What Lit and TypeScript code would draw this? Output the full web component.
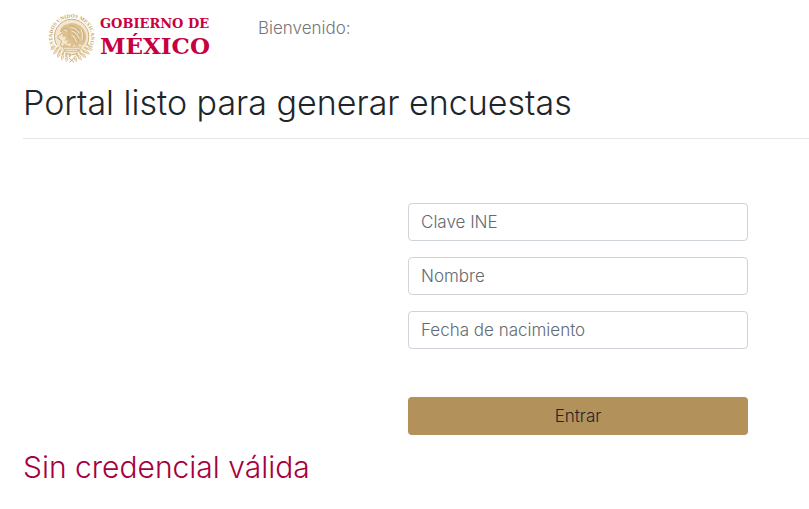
import { LitElement, html, css, svg } from "lit";
import { customElement } from "lit/decorators.js";

/* Leaves of the laurel and oak wreath, set along the lower part of the seal. */
const leafAngles = [-60, -48, -36, -24, -12, 12, 24, 36, 48, 60];

@customElement("national-seal")
export class NationalSeal extends LitElement {
  static styles = css`
    :host {
      display: block;
      width: 47px;
      height: 54px;
    }
    svg {
      display: block;
      width: 100%;
      height: 100%;
    }
    .legend {
      font: 700 16px "Liberation Serif", serif;
      fill: #c9a76d;
    }
    .pale {
      fill: #f3e7d0;
    }
    .gold {
      fill: #dcc293;
    }
    .line {
      fill: none;
      stroke: #cdae78;
      stroke-width: 3;
      stroke-linecap: round;
    }
    .light {
      fill: none;
      stroke: #fffaf0;
      stroke-width: 2;
      stroke-linecap: round;
    }
  `;

  render() {
    return html`
      <svg viewBox="24 18 141 162" aria-hidden="true">
        <defs>
          <path id="arc" d="M53 139 A58 58 0 1 1 137 139" />
        </defs>
        <circle class="pale" cx="95" cy="99" r="52" />
        <text class="legend">
          <textPath href="#arc" startOffset="50%" text-anchor="middle">ESTADOS UNIDOS MEXICANOS</textPath>
        </text>
        <path class="line" d="M49 122 A52 52 0 1 1 141 122" />
        ${leafAngles.map(
          (a) => svg`
            <g transform="rotate(${a} 95 102)">
              <path class="gold" d="M95 176 Q84 167 91 155 Q102 162 95 176Z" />
              <path class="gold" d="M101 162 Q94 155 99 147 Q108 153 101 162Z" />
              <path class="light" d="M94 171 L93 160" />
            </g>`
        )}
        <path
          class="gold"
          d="M60 82 Q64 64 82 61 Q97 52 115 62 Q132 70 138 91 Q142 112 127 126 L119 120 L113 131 L104 122 L95 129 L91 118 L79 121 L84 108 L73 111 L79 98 L66 99 L72 89Z"
        />
        <path
          class="line"
          d="M63 83 Q65 72 79 73 Q90 75 87 87 Q83 99 92 105 M91 65 Q109 66 119 80 M95 76 Q112 78 120 96 M96 87 Q111 91 115 110 M100 103 L107 119 M127 78 Q136 94 129 112 M65 88 L71 91"
        />
        <path class="light" d="M94 71 Q109 72 117 88 M97 82 Q110 85 117 103 M124 77 Q132 92 126 109 M98 94 Q106 101 109 115 M75 79 L80 81" />
        <path class="line" d="M63 91 Q49 94 56 105 Q67 108 63 118 Q58 127 69 129 M73 121 Q83 132 93 126 M91 132 L113 132" />
        <path class="gold" d="M67 127 Q70 118 77 127 Q83 119 87 128 Q95 120 101 129 Q110 120 115 129 Q123 121 125 132 L117 144 L73 144Z" />
        <path class="light" d="M73 133 H118 M80 139 H110" />
        <path class="line" d="M78 149 Q95 157 112 149 M89 164 L101 174 M101 164 L89 174" />
      </svg>
    `;
  }
}

@customElement("app-root")
export class AppRoot extends LitElement {
  static styles = css`
    :host {
      display: block;
      background: #fff;
      color: #212529;
      font-family: Inter, "Open Sans", sans-serif;
      font-size: 17px;
      font-weight: 300;
      line-height: 24px;
    }
    * {
      box-sizing: border-box;
    }
    header {
      display: flex;
      align-items: flex-start;
      gap: 48px;
      padding: 10px 24px 0 48px;
    }
    .brand {
      display: flex;
      align-items: flex-start;
      gap: 5px;
      color: #c8003f;
      font-family: "DejaVu Serif", serif;
      font-weight: 700;
      text-decoration: none;
      white-space: nowrap;
    }
    .name {
      display: flex;
      flex-direction: column;
      padding-top: 6px;
    }
    .small {
      font-size: 13px;
      line-height: 16px;
    }
    .large {
      font-size: 23px;
      line-height: 28px;
    }
    .welcome {
      margin: 0;
      padding-top: 6px;
      color: #777;
    }
    main {
      padding-left: 23px;
    }
    h1,
    h2 {
      margin: 0;
      font-weight: 300;
    }
    h1 {
      padding: 19px 0 15px;
      border-bottom: 1px solid #e5e5e5;
      font-size: 34px;
      line-height: 40px;
    }
    .row {
      display: grid;
      grid-template-columns: 385fr 340fr 61fr;
      padding-top: 64px;
    }
    form {
      grid-column: 2;
      display: flex;
      flex-direction: column;
      gap: 16px;
    }
    input,
    button {
      width: 100%;
      height: 38px;
      margin: 0;
      border-radius: 4px;
      font: inherit;
    }
    input {
      padding: 6px 12px;
      border: 1px solid #ced4da;
      background: #fff;
      color: #495057;
    }
    input::placeholder {
      color: #636b73;
      opacity: 1;
    }
    button {
      margin-top: 32px;
      border: 0;
      background: #b3915b;
      color: #212529;
    }
    h2 {
      padding: 15px 0;
      color: #a6003f;
      font-size: 30px;
      line-height: 34px;
    }
  `;

  render() {
    return html`
      <header>
        <a class="brand" href="#">
          <national-seal></national-seal>
          <span class="name">
            <span class="small">GOBIERNO DE</span>
            <span class="large">MÉXICO</span>
          </span>
        </a>
        <p class="welcome">Bienvenido:</p>
      </header>
      <main>
        <h1>Portal listo para generar encuestas</h1>
        <div class="row">
          <form @submit=${(e: Event) => e.preventDefault()}>
            <input type="text" aria-label="Clave INE" placeholder="Clave INE" />
            <input type="text" aria-label="Nombre" placeholder="Nombre" />
            <input type="text" aria-label="Fecha de nacimiento" placeholder="Fecha de nacimiento" />
            <button type="submit">Entrar</button>
          </form>
        </div>
        <h2>Sin credencial válida</h2>
      </main>
    `;
  }
}
